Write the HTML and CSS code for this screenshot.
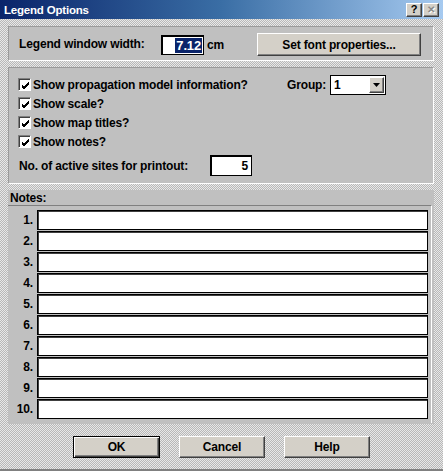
FILE: index.html
```html
<!DOCTYPE html>
<html>
<head>
<meta charset="utf-8">
<link rel="stylesheet" href="styles.css">
</head>
<body>
<div class="win">
  <div class="titlebar">
    <span class="title">Legend Options</span>
    <div class="tbtns"><span class="tb help">?</span><span class="tb close">✕</span></div>
  </div>

  <div class="panel p1">
    <span class="lbl wlbl">Legend window width:</span>
    <span class="field wfield"><span class="sel">7.12</span></span>
    <span class="unit">cm</span>
    <span class="btn fontbtn">Set font properties...</span>
  </div>

  <div class="panel p2">
    <div class="row">
      <span class="chk wide"><span class="box"><svg width="9" height="9" viewBox="0 0 9 9"><path d="M1 4 L3 6 L8 1 M1 5 L3 7 L8 2 M1 6 L3 8 L8 3" stroke="#000" stroke-width="1" fill="none"/></svg></span>Show propagation model information?</span>
      <span class="grp">Group:</span>
      <span class="combo"><span class="cval">1</span><span class="arrow"><svg width="7" height="4" viewBox="0 0 7 4"><path d="M0 0 H7 L3.5 4 Z" fill="#000"/></svg></span></span>
    </div>
    <div class="row">
      <span class="chk"><span class="box"><svg width="9" height="9" viewBox="0 0 9 9"><path d="M1 4 L3 6 L8 1 M1 5 L3 7 L8 2 M1 6 L3 8 L8 3" stroke="#000" stroke-width="1" fill="none"/></svg></span>Show scale?</span>
    </div>
    <div class="row">
      <span class="chk"><span class="box"><svg width="9" height="9" viewBox="0 0 9 9"><path d="M1 4 L3 6 L8 1 M1 5 L3 7 L8 2 M1 6 L3 8 L8 3" stroke="#000" stroke-width="1" fill="none"/></svg></span>Show map titles?</span>
    </div>
    <div class="row">
      <span class="chk"><span class="box"><svg width="9" height="9" viewBox="0 0 9 9"><path d="M1 4 L3 6 L8 1 M1 5 L3 7 L8 2 M1 6 L3 8 L8 3" stroke="#000" stroke-width="1" fill="none"/></svg></span>Show notes?</span>
    </div>
    <div class="row sites">
      <span class="lbl slbl">No. of active sites for printout:</span>
      <span class="field sfield">5</span>
    </div>
  </div>

  <div class="panel notes">
    <div class="nlabel">Notes:</div>
    <div class="grid">
      <div class="nrow"><span class="num">1.</span><span class="nin"></span></div>
      <div class="nrow"><span class="num">2.</span><span class="nin"></span></div>
      <div class="nrow"><span class="num">3.</span><span class="nin"></span></div>
      <div class="nrow"><span class="num">4.</span><span class="nin"></span></div>
      <div class="nrow"><span class="num">5.</span><span class="nin"></span></div>
      <div class="nrow"><span class="num">6.</span><span class="nin"></span></div>
      <div class="nrow"><span class="num">7.</span><span class="nin"></span></div>
      <div class="nrow"><span class="num">8.</span><span class="nin"></span></div>
      <div class="nrow"><span class="num">9.</span><span class="nin"></span></div>
      <div class="nrow"><span class="num">10.</span><span class="nin"></span></div>
    </div>
  </div>

  <div class="buttons">
    <span class="btn dbtn ok">OK</span>
    <span class="btn dbtn">Cancel</span>
    <span class="btn dbtn">Help</span>
  </div>
</div>
</body>
</html>
```

FILE: styles.css
```css
* { box-sizing: border-box; }
html, body { margin: 0; padding: 0; }
body {
  width: 443px;
  height: 471px;
  overflow: hidden;
  font-family: "Liberation Sans", Arial, sans-serif;
  font-weight: bold;
  font-size: 12px;
  letter-spacing: -0.15px;
  color: #000;
}
.win {
  width: 443px;
  height: 471px;
  display: flex;
  flex-direction: column;
  background: repeating-conic-gradient(#b8b8b8 0 25%, #e8e8e8 0 50%) 0 0 / 2px 2px;
  border-bottom: 2px solid #808080;
}
.titlebar {
  height: 19px;
  flex: none;
  display: flex;
  align-items: center;
  padding-left: 4px;
  padding-right: 4px;
  background: linear-gradient(to right, #0a246a 0%, #3a6ea5 50%, #a6caf0 100%);
}
.title {
  color: #fff;
  font-size: 11.5px;
  letter-spacing: -0.2px;
  flex: 1;
}
.tbtns { display: flex; gap: 1px; }
.tb {
  width: 16px;
  height: 14px;
  background: #d4d0c8;
  border-top: 1px solid #fff;
  border-left: 1px solid #fff;
  border-right: 1px solid #404040;
  border-bottom: 1px solid #404040;
  box-shadow: inset -1px -1px 0 #808080;
  display: flex;
  align-items: center;
  justify-content: center;
  font-size: 11px;
  line-height: 1;
}
.tb.close {
  color: #8a8a8a;
  text-shadow: 1px 1px 0 #fff;
  font-size: 10px;
}
.panel {
  flex: none;
  margin-left: 8px;
  margin-right: 9px;
  background: #c0c0c0;
  border-top: 1px solid #9a9a9a;
  border-left: 1px solid #9a9a9a;
  border-right: 1px solid #fff;
  border-bottom: 1px solid #fff;
}
.p1 {
  margin-top: 7px;
  height: 35px;
  display: flex;
  align-items: center;
  padding-left: 10px;
  padding-right: 12px;
}
.wlbl { width: 142px; }
.field {
  background: #fff;
  border-top: 2px solid #000;
  border-left: 2px solid #000;
  border-right: 1px solid #000;
  border-bottom: 1px solid #000;
  height: 20px;
  display: flex;
  align-items: center;
}
.wfield {
  width: 43px;
  justify-content: flex-end;
  padding-right: 1px;
  margin-top: 3px;
}
.sel {
  background: #0a246a;
  color: #fff;
  padding: 0 1px;
  line-height: 15px;
  font-size: 13px;
}
.unit { margin-left: 3px; margin-top: 3px; }
.btn {
  background: #d4d0c8;
  border-top: 1px solid #fff;
  border-left: 1px solid #fff;
  border-right: 1px solid #404040;
  border-bottom: 1px solid #404040;
  box-shadow: inset -1px -1px 0 #808080;
  display: flex;
  align-items: center;
  justify-content: center;
}
.fontbtn {
  margin-left: auto;
  width: 164px;
  height: 23px;
  margin-top: 2px;
}
.p2 {
  margin-top: 6px;
  height: 117px;
  padding-top: 7px;
  padding-left: 9px;
  display: flex;
  flex-direction: column;
}
.row {
  height: 19px;
  display: flex;
  align-items: center;
}
.chk { display: flex; align-items: center; }
.chk.wide { width: 269px; }
.box {
  width: 13px;
  height: 13px;
  margin-right: 2px;
  background: #fff;
  border-top: 1px solid #808080;
  border-left: 1px solid #808080;
  border-right: 1px solid #fff;
  border-bottom: 1px solid #fff;
  box-shadow: inset 1px 1px 0 #404040;
  display: flex;
  align-items: center;
  justify-content: center;
  padding: 1px 0 0 1px;
}
.grp { margin-right: 4px; }
.combo {
  width: 56px;
  height: 20px;
  background: #fff;
  border: 1px solid #000;
  display: flex;
  align-items: center;
  padding: 1px 1px 1px 3px;
}
.cval { flex: 1; }
.arrow {
  width: 15px;
  height: 16px;
  background: #d4d0c8;
  border-top: 1px solid #fff;
  border-left: 1px solid #fff;
  border-right: 1px solid #404040;
  border-bottom: 1px solid #404040;
  box-shadow: inset -1px -1px 0 #808080;
  display: flex;
  align-items: center;
  justify-content: center;
}
.row.sites {
  height: 21px;
  margin-top: 4px;
  padding-left: 1px;
}
.slbl { width: 191px; }
.sfield {
  width: 42px;
  height: 21px;
  justify-content: flex-end;
  padding-right: 3px;
}
.notes {
  margin-top: 6px;
  height: 234px;
  border: none;
  display: flex;
  flex-direction: column;
}
.nlabel {
  height: 15px;
  padding-left: 2px;
  display: flex;
  align-items: center;
}
.grid {
  margin-right: 2px;
  height: 218px;
  border-top: 1px solid #808080;
  border-right: 1px solid #fff;
  padding-top: 4px;
  display: flex;
  flex-direction: column;
  gap: 1px;
}
.nrow {
  height: 20px;
  display: flex;
  align-items: center;
}
.num {
  width: 26px;
  text-align: right;
  padding-right: 1px;
  margin-right: 3px;
}
.nin {
  width: 391px;
  height: 20px;
  background: #fff;
  border: 1px solid #000;
  box-shadow: inset 1px 1px 0 #404040;
}
.buttons {
  margin-top: 12px;
  display: flex;
  justify-content: center;
  gap: 19px;
}
.dbtn {
  width: 86px;
  height: 22px;
}
.dbtn.ok {
  width: 87px;
  border: 1px solid #000;
  box-shadow: inset 1px 1px 0 #fff, inset -1px -1px 0 #404040, inset -2px -2px 0 #808080;
}
```
